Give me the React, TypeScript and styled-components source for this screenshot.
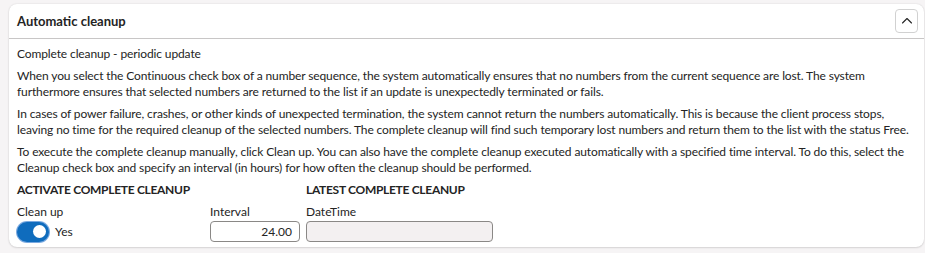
import styled, { createGlobalStyle } from "styled-components";

const GlobalStyle = createGlobalStyle`
  body {
    margin: 0;
    background: #f6f4f5;
    font-family: "Segoe UI", Lato, "Noto Sans", sans-serif;
    color: #242424;
  }
`;

const paragraphs: string[][] = [
  ["Complete cleanup - periodic update"],
  [
    "When you select the Continuous check box of a number sequence, the system automatically ensures that no numbers from the current sequence are lost. The system",
    "furthermore ensures that selected numbers are returned to the list if an update is unexpectedly terminated or fails.",
  ],
  [
    "In cases of power failure, crashes, or other kinds of unexpected termination, the system cannot return the numbers automatically. This is because the client process stops,",
    "leaving no time for the required cleanup of the selected numbers. The complete cleanup will find such temporary lost numbers and return them to the list with the status Free.",
  ],
  [
    "To execute the complete cleanup manually, click Clean up. You can also have the complete cleanup executed automatically with a specified time interval. To do this, select the",
    "Cleanup check box and specify an interval (in hours) for how often the cleanup should be performed.",
  ],
];

const ChevronUp = () => (
  <svg width="12" height="12" viewBox="0 0 12 12" fill="none">
    <path d="M1.5 8 L6 3.5 L10.5 8" stroke="#242424" strokeWidth="1.1" strokeLinecap="round" strokeLinejoin="round" />
  </svg>
);

export default function App() {
  return (
    <>
      <GlobalStyle />
      <Page>
        <Card>
          <Header>
            <Title>Automatic cleanup</Title>
            <CollapseButton aria-label="Collapse">
              <ChevronUp />
            </CollapseButton>
          </Header>
          <Body>
            {paragraphs.map((lines, i) => (
              <Paragraph key={i}>
                {lines.map((line) => (
                  <Line key={line}>{line}</Line>
                ))}
              </Paragraph>
            ))}
            <Groups>
              <Group>
                <GroupTitle>Activate complete cleanup</GroupTitle>
                <Fields>
                  <Field $width={193}>
                    <Label>Clean up</Label>
                    <ToggleRow>
                      <Toggle>
                        <Knob />
                      </Toggle>
                      <ToggleText>Yes</ToggleText>
                    </ToggleRow>
                  </Field>
                  <Field $width={90}>
                    <Label>Interval</Label>
                    <Input $align="right">24.00</Input>
                  </Field>
                </Fields>
              </Group>
              <Group>
                <GroupTitle>Latest complete cleanup</GroupTitle>
                <Fields>
                  <Field $width={187}>
                    <Label>DateTime</Label>
                    <Input $disabled />
                  </Field>
                </Fields>
              </Group>
            </Groups>
          </Body>
        </Card>
      </Page>
    </>
  );
}

const Page = styled.div`
  padding: 4px 1px 5px 9px;
`;

const Card = styled.div`
  background: #ffffff;
  border-radius: 8px;
  box-shadow: 0 0 2px rgba(0, 0, 0, 0.12), 0 1px 2px rgba(0, 0, 0, 0.1);
  overflow: hidden;
`;

const Header = styled.div`
  display: flex;
  align-items: center;
  justify-content: space-between;
  height: 34px;
  padding: 0 6px 0 8px;
  border-bottom: 1px solid #c8c6c6;
`;

const Title = styled.h2`
  margin: 0;
  font-size: 13px;
  font-weight: 700;
`;

const CollapseButton = styled.button`
  display: flex;
  align-items: center;
  justify-content: center;
  width: 23px;
  height: 24px;
  padding: 0;
  background: #ffffff;
  border: 1px solid #d1d1d1;
  border-radius: 4px;
`;

const Body = styled.div`
  padding: 7px 8px 5px 8px;
  font-size: 12px;
`;

const Paragraph = styled.p`
  margin: 0 0 6px;
  line-height: 16px;
  letter-spacing: -0.12px;
`;

const Line = styled.span`
  display: block;
  white-space: nowrap;
`;

const Groups = styled.div`
  display: flex;
  gap: 6px;
`;

const Group = styled.div`
  display: flex;
  flex-direction: column;
`;

const GroupTitle = styled.h3`
  margin: 0 0 6px;
  font-size: 12px;
  font-weight: 700;
  letter-spacing: -0.3px;
  text-transform: uppercase;
  line-height: 16px;
`;

const Fields = styled.div`
  display: flex;
`;

const Field = styled.div<{ $width: number }>`
  display: flex;
  flex-direction: column;
  width: ${(p) => p.$width}px;
`;

const Label = styled.span`
  line-height: 16px;
  margin-bottom: 1px;
`;

const ToggleRow = styled.div`
  display: flex;
  align-items: center;
  gap: 6px;
  height: 21px;
`;

const Toggle = styled.div`
  display: flex;
  align-items: center;
  justify-content: flex-end;
  box-sizing: border-box;
  width: 32px;
  height: 20px;
  padding: 0 3px;
  background: #0f6cbd;
  border-radius: 10px;
  box-shadow: 0 0 0 1px #7aa9e0;
`;

const Knob = styled.span`
  width: 13px;
  height: 13px;
  border-radius: 50%;
  background: #ffffff;
`;

const ToggleText = styled.span``;

const Input = styled.div<{ $align?: string; $disabled?: boolean }>`
  box-sizing: border-box;
  height: 21px;
  padding: 0 7px;
  line-height: 19px;
  text-align: ${(p) => p.$align || "left"};
  background: ${(p) => (p.$disabled ? "#f3f0f1" : "#ffffff")};
  border: 1px solid #8a8886;
  border-radius: 4px;
`;
